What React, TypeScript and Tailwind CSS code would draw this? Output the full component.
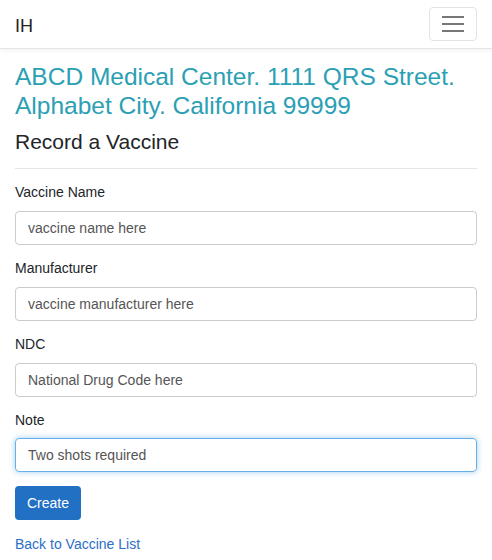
import React from "react"

const fields = [
  { label: "Vaccine Name", placeholder: "vaccine name here" },
  { label: "Manufacturer", placeholder: "vaccine manufacturer here" },
  { label: "NDC", placeholder: "National Drug Code here" },
]

export default function App() {
  return (
    <div className="min-h-[560px] bg-white font-['Liberation_Sans',Arial,sans-serif] text-[#212529]">
      <nav className="flex h-[49px] items-center justify-between border-b border-[#e5e5e5] px-[15px] shadow-[0_2px_4px_rgba(0,0,0,0.05)]">
        <span className="pt-[3px] text-[18px] leading-none text-[#222]">IH</span>
        <button className="flex h-[34px] w-[48px] flex-col items-center justify-center gap-[5px] rounded border border-[#e3e3e3]">
          <span className="block h-[2px] w-[22px] bg-[#777]" />
          <span className="block h-[2px] w-[22px] bg-[#777]" />
          <span className="block h-[2px] w-[22px] bg-[#777]" />
        </button>
      </nav>

      <main className="px-[15px] pt-[13px]">
        <h1 className="text-[24.5px] leading-[29px] text-[#2ba0b4]">
          ABCD Medical Center. 1111 QRS Street. Alphabet City. California 99999
        </h1>
        <h2 className="mt-[9px] text-[21px] leading-[25px]">Record a Vaccine</h2>
        <hr className="mt-[14px] mb-[13px] border-[#e6e6e6]" />

        <form>
          {fields.map((f) => (
            <div key={f.label} className="mb-[13px]">
              <label className="block text-[14px] leading-[20px] mb-[9px]">{f.label}</label>
              <input
                readOnly
                placeholder={f.placeholder}
                className="h-[34px] w-full rounded border border-[#ccc] px-[12px] text-[14px] placeholder:text-[#555] outline-none"
              />
            </div>
          ))}
          <div className="mb-[14px]">
            <label className="block text-[14px] leading-[20px] mb-[8px]">Note</label>
            <input
              readOnly
              value="Two shots required"
              className="h-[34px] w-full rounded border border-[#66afe9] px-[12px] text-[14px] text-[#555] outline-none shadow-[0_0_6px_rgba(102,175,233,0.6)]"
            />
          </div>
          <button type="button" className="h-[34px] rounded bg-[#2170c4] px-[12px] text-[14px] text-white">
            Create
          </button>
        </form>

        <a href="#" className="mt-[14px] block text-[14px] leading-[20px] text-[#2b6fc4]">
          Back to Vaccine List
        </a>
      </main>
    </div>
  )
}
